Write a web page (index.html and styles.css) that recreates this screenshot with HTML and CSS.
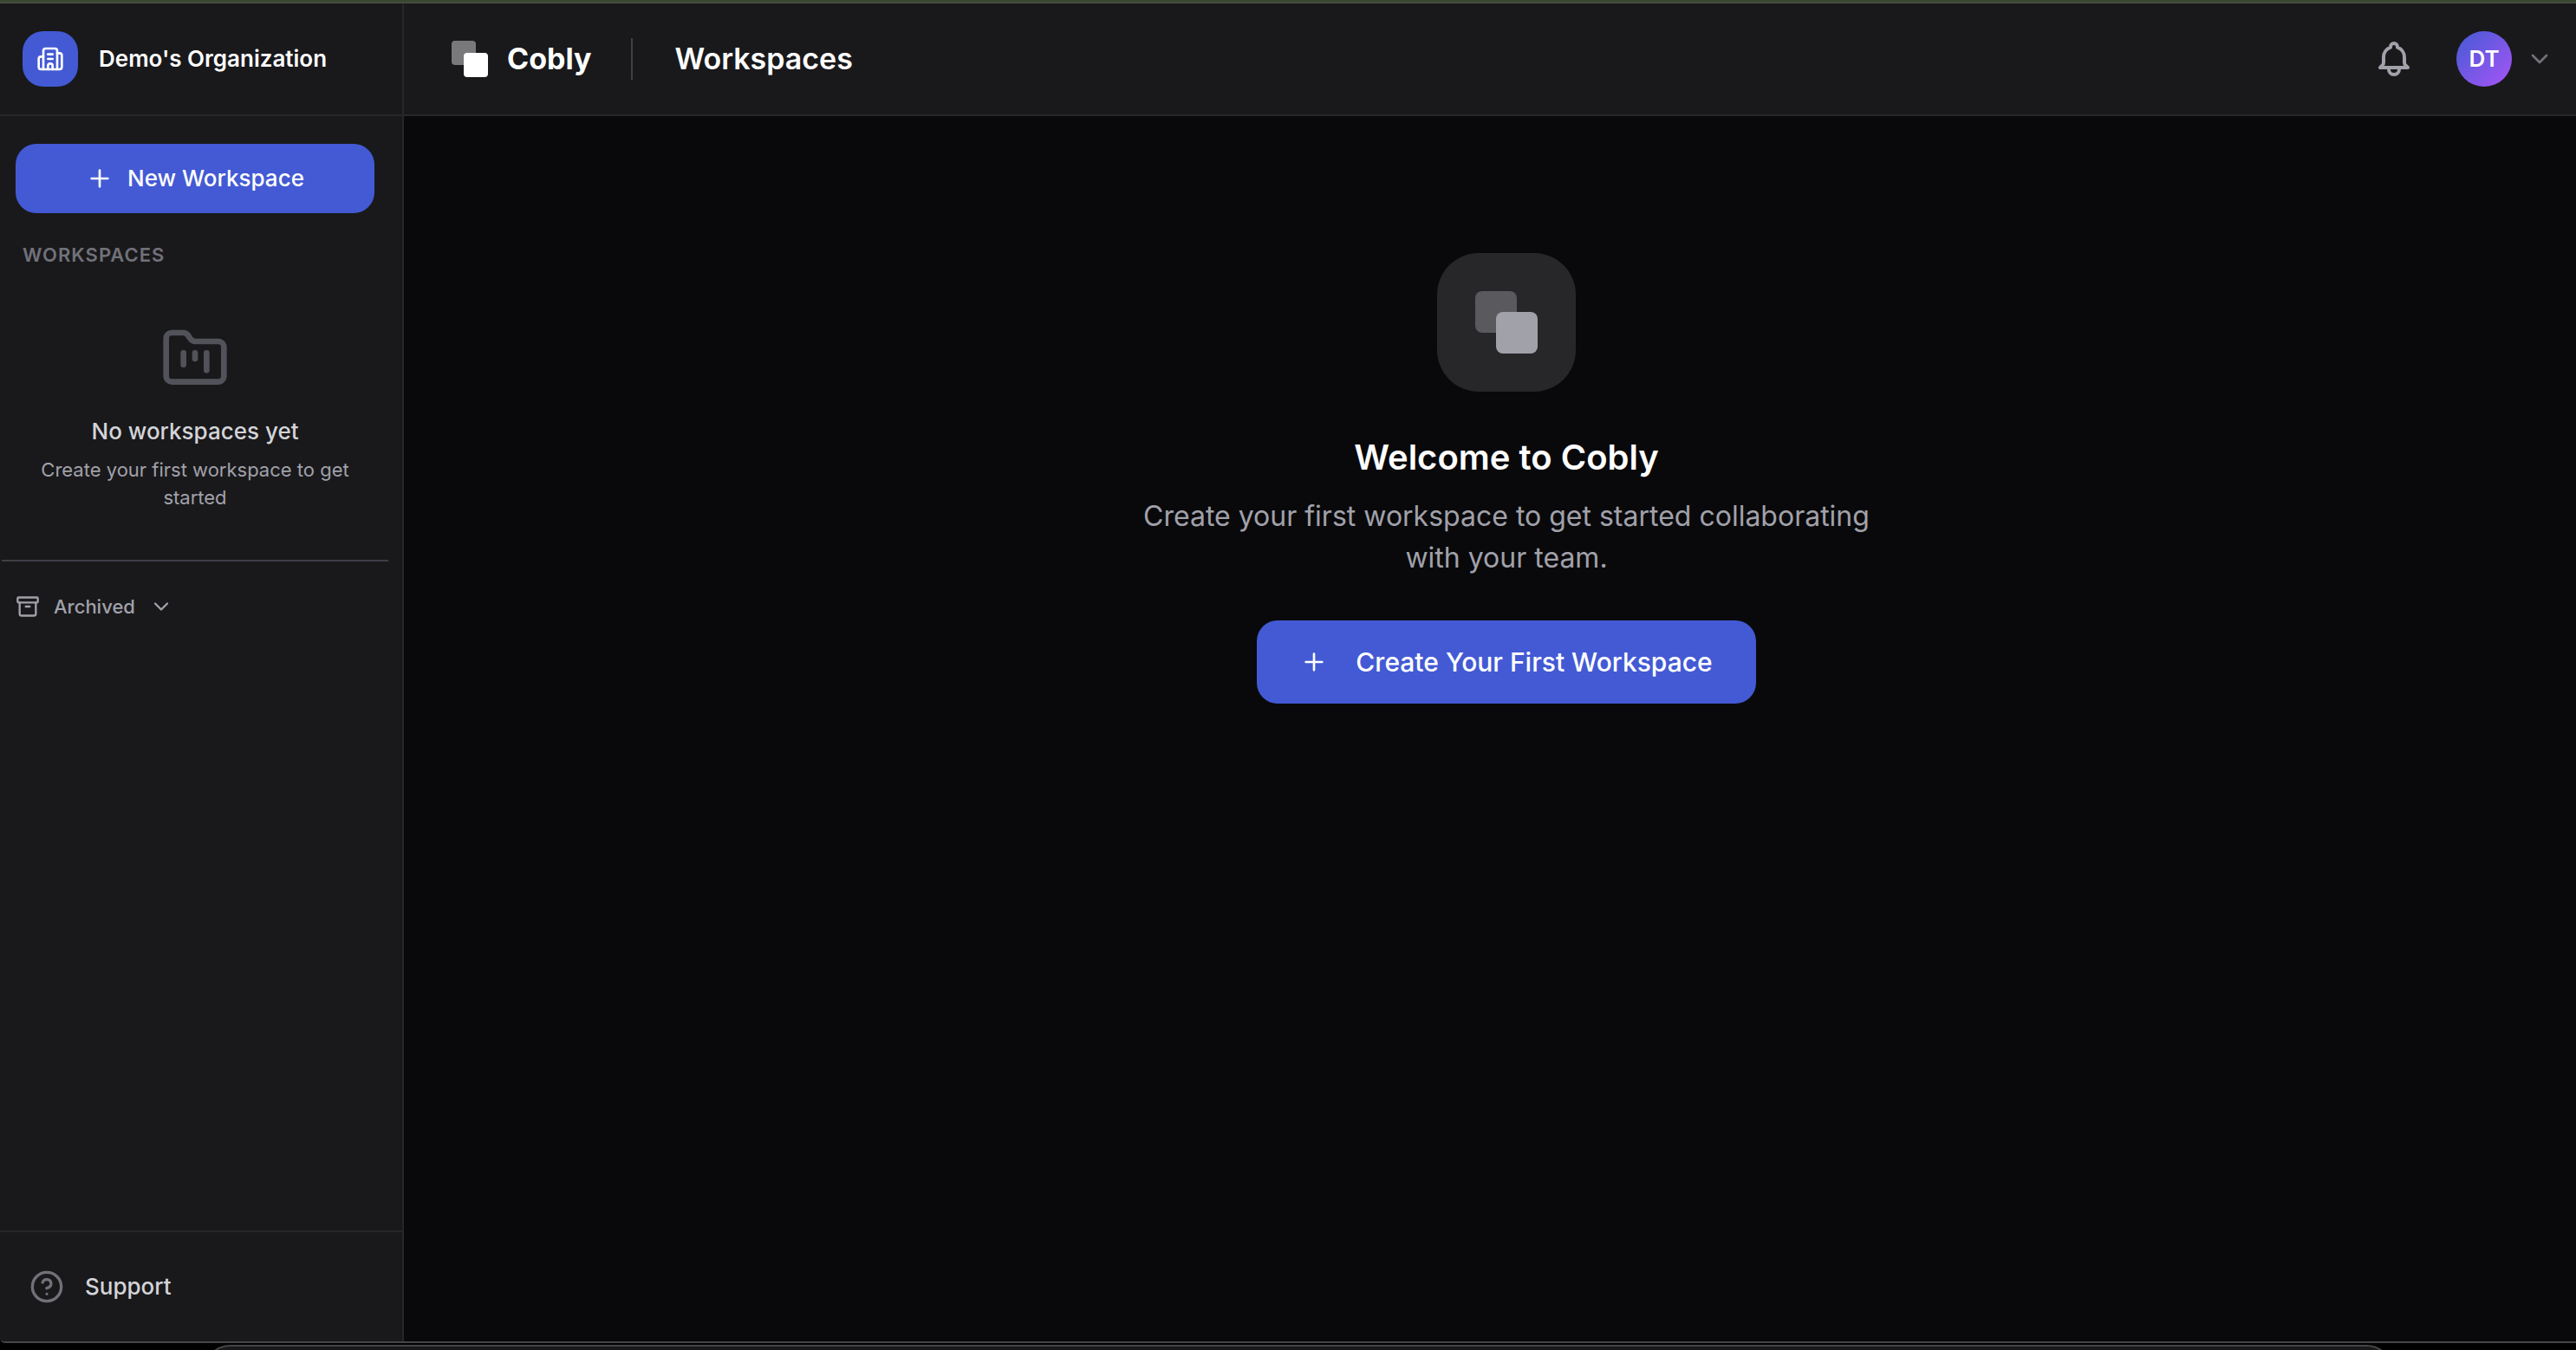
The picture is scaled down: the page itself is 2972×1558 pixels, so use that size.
FILE: index.html
```html
<!DOCTYPE html>
<html lang="en">
<head>
  <meta charset="UTF-8">
  <meta name="viewport" content="width=device-width, initial-scale=1.0">
  <title>Cobly - Workspaces</title>
  <link rel="stylesheet" href="styles.css">
</head>
<body>
  <div class="app">
    <aside class="sidebar">
      <div class="org">
        <span class="org-icon">
          <svg class="icon icon-md" viewBox="0 0 24 24" stroke-width="2">
            <path d="M10 12h4M10 8h4M14 21v-3a2 2 0 0 0-4 0v3"/>
            <path d="M6 10H4a2 2 0 0 0-2 2v7a2 2 0 0 0 2 2h16a2 2 0 0 0 2-2V9a2 2 0 0 0-2-2h-2"/>
            <path d="M6 21V5a2 2 0 0 1 2-2h8a2 2 0 0 1 2 2v16"/>
          </svg>
        </span>
        <span class="org-name">Demo's Organization</span>
      </div>

      <nav class="sidebar-content">
        <div class="workspaces">
          <button class="btn btn-new" type="button">
            <svg class="icon icon-md" viewBox="0 0 24 24" stroke-width="2"><path d="M5 12h14M12 5v14"/></svg>
            New Workspace
          </button>
          <h2 class="section-title">Workspaces</h2>
          <div class="empty">
            <svg class="icon icon-folder" viewBox="0 0 24 24" stroke-width="2">
              <path d="M4 20h16a2 2 0 0 0 2-2V8a2 2 0 0 0-2-2h-7.93a2 2 0 0 1-1.66-.9l-.82-1.2A2 2 0 0 0 7.93 3H4a2 2 0 0 0-2 2v13c0 1.1.9 2 2 2Z"/>
              <path d="M8 10v4M12 10v2M16 10v6"/>
            </svg>
            <p class="empty-title">No workspaces yet</p>
            <p class="empty-text">Create your first workspace to get started</p>
          </div>
        </div>
        <button class="archived" type="button">
          <svg class="icon icon-sm" viewBox="0 0 24 24" stroke-width="2">
            <rect x="2" y="3" width="20" height="5" rx="1"/>
            <path d="M4 8v11a2 2 0 0 0 2 2h12a2 2 0 0 0 2-2V8M10 12h4"/>
          </svg>
          Archived
          <svg class="icon icon-sm" viewBox="0 0 24 24" stroke-width="2"><path d="m6 9 6 6 6-6"/></svg>
        </button>
      </nav>

      <a class="support" href="#">
        <svg class="icon icon-lg" viewBox="0 0 24 24" stroke-width="2">
          <circle cx="12" cy="12" r="10"/>
          <path d="M9.09 9a3 3 0 0 1 5.83 1c0 2-3 3-3 3M12 17h.01"/>
        </svg>
        Support
      </a>
    </aside>

    <div class="page">
      <header class="topbar">
        <a class="brand" href="#">
          <svg class="brand-logo" viewBox="0 0 42 42">
            <rect class="logo-back" width="28" height="28" rx="4"/>
            <rect class="logo-front" x="14" y="14" width="28" height="28" rx="4"/>
          </svg>
          Cobly
        </a>
        <h1 class="page-title">Workspaces</h1>
        <button class="bell" type="button" aria-label="Notifications">
          <svg class="icon icon-bell" viewBox="0 0 24 24" stroke-width="2">
            <path d="M15 17h5l-1.405-1.405A2.032 2.032 0 0118 14.158V11a6.002 6.002 0 00-4-5.659V5a2 2 0 10-4 0v.341C7.67 6.165 6 8.388 6 11v3.159c0 .538-.214 1.055-.595 1.436L4 17h5m6 0v1a3 3 0 11-6 0v-1m6 0H9"/>
          </svg>
        </button>
        <button class="account" type="button">
          <span class="avatar">DT</span>
          <svg class="icon icon-md" viewBox="0 0 24 24" stroke-width="2"><path d="m6 9 6 6 6-6"/></svg>
        </button>
      </header>

      <main class="welcome">
        <div class="welcome-logo">
          <svg class="tile-logo" viewBox="0 0 72 72">
            <rect class="logo-back" width="48" height="48" rx="8"/>
            <rect class="logo-front" x="24" y="24" width="48" height="48" rx="8"/>
          </svg>
        </div>
        <h2 class="welcome-title">Welcome to Cobly</h2>
        <p class="welcome-text">Create your first workspace to get started collaborating with your team.</p>
        <button class="btn btn-create" type="button">
          <svg class="icon icon-md" viewBox="0 0 24 24" stroke-width="2"><path d="M5 12h14M12 5v14"/></svg>
          Create Your First Workspace
        </button>
      </main>
    </div>
  </div>

  <div class="desktop">
    <div class="next-window"></div>
  </div>
</body>
</html>
```

FILE: styles.css
```css
* {
  box-sizing: border-box;
}

body {
  margin: 0;
  height: 100vh;
  display: flex;
  flex-direction: column;
  background: #000;
  color: #fff;
  font-family: Inter, sans-serif;
  font-size: 26px;
  line-height: 40px;
  overflow: hidden;
}

h1, h2, p {
  margin: 0;
}

button {
  font: inherit;
  color: inherit;
  background: none;
  border: none;
  padding: 0;
  cursor: pointer;
}

a {
  color: inherit;
  text-decoration: none;
}

.app {
  flex: 1;
  display: flex;
  border-top: 2px solid #484b41;
  border-bottom: 2px solid #454547;
  box-shadow: 0 -2px 0 #37472f;
  margin-top: 2px;
  border-bottom-left-radius: 6px;
  overflow: hidden;
}

/* icons */
.icon {
  flex: none;
  fill: none;
  stroke: currentColor;
  stroke-linecap: round;
  stroke-linejoin: round;
}

.icon-sm {
  width: 28px;
  height: 28px;
}

.icon-md {
  width: 32px;
  height: 32px;
}

.icon-lg {
  width: 40px;
  height: 40px;
  color: #71717a;
}

.icon-bell {
  display: block;
  width: 48px;
  height: 48px;
}

.icon-folder {
  width: 80px;
  height: 80px;
  color: #52525b;
}

.logo-back {
  fill: #79797b;
}

.logo-front {
  fill: #fff;
}

/* sidebar */
.sidebar {
  flex: none;
  width: 466px;
  display: flex;
  flex-direction: column;
  background: #19191b;
  border-right: 2px solid #27272a;
}

.org {
  display: flex;
  align-items: center;
  gap: 24px;
  height: 130px;
  padding: 0 26px;
  border-bottom: 2px solid #27272a;
  font-weight: 600;
}

.org-icon {
  display: grid;
  place-items: center;
  width: 64px;
  height: 64px;
  border-radius: 24px;
  background: #435ad4;
}

.sidebar-content {
  flex: 1;
  padding: 32px 16px 0 2px;
}

.workspaces {
  padding: 0 16px 56px;
  border-bottom: 2px solid #3f3f46;
}

.btn {
  display: flex;
  align-items: center;
  justify-content: center;
  gap: 16px;
  border-radius: 24px;
  background: #435ad4;
  font-weight: 500;
}

.btn-new {
  width: 100%;
  height: 80px;
}

.section-title {
  margin-top: 32px;
  padding: 0 8px;
  color: #71717a;
  font-size: 22px;
  line-height: 32px;
  font-weight: 600;
  letter-spacing: 1px;
  text-transform: uppercase;
}

.empty {
  display: flex;
  flex-direction: column;
  align-items: center;
  padding: 64px 16px 0;
  text-align: center;
}

.empty-title {
  margin-top: 24px;
  color: #d4d4d8;
  font-weight: 500;
}

.empty-text {
  margin-top: 8px;
  color: #a1a1aa;
  font-size: 22px;
  line-height: 32px;
}

.archived {
  display: flex;
  align-items: center;
  gap: 16px;
  padding: 32px 16px;
  color: #a1a1aa;
  font-size: 22px;
  font-weight: 500;
}

.support {
  display: flex;
  align-items: center;
  gap: 24px;
  height: 128px;
  padding: 0 34px;
  border-top: 2px solid #27272a;
  color: #d4d4d8;
  font-weight: 500;
}

/* top bar */
.page {
  flex: 1;
  display: flex;
  flex-direction: column;
  background: #09090b;
}

.topbar {
  display: flex;
  align-items: center;
  height: 130px;
  padding: 0 26px 0 55px;
  background: #19191b;
  border-bottom: 2px solid #27272a;
}

.brand {
  display: flex;
  align-items: center;
  gap: 22px;
  height: 48px;
  padding-right: 46px;
  border-right: 2px solid #3f3f46;
  font-size: 34px;
  font-weight: 700;
}

.brand-logo {
  width: 42px;
  height: 42px;
}

.page-title {
  margin-left: 48px;
  font-size: 34px;
  font-weight: 600;
}

.bell {
  margin-left: auto;
  color: #a1a1aa;
}

.account {
  display: flex;
  align-items: center;
  gap: 16px;
  margin-left: 48px;
  color: #71717a;
}

.avatar {
  display: grid;
  place-items: center;
  width: 64px;
  height: 64px;
  border-radius: 50%;
  background: linear-gradient(135deg, #435ad4, #a855f7);
  color: #fff;
  font-weight: 600;
}

/* welcome */
.welcome {
  flex: 1;
  display: flex;
  flex-direction: column;
  align-items: center;
  padding: 158px 0 0 38px;
  text-align: center;
}

.welcome-logo {
  display: grid;
  place-items: center;
  width: 160px;
  height: 160px;
  border-radius: 48px;
  background: #27272a;
}

.tile-logo {
  width: 72px;
  height: 72px;
}

.tile-logo .logo-back {
  fill: #5a5a5e;
}

.tile-logo .logo-front {
  fill: #a1a1aa;
}

.welcome-title {
  margin-top: 48px;
  font-size: 40px;
  line-height: 56px;
  font-weight: 600;
}

.welcome-text {
  max-width: 896px;
  margin-top: 16px;
  color: #a1a1aa;
  font-size: 32px;
  line-height: 48px;
}

.btn-create {
  gap: 32px;
  height: 96px;
  margin-top: 48px;
  padding: 0 50px;
  font-size: 30px;
}

/* strip under the app window */
.desktop {
  height: 8px;
  padding: 2px 210px 0 234px;
  overflow: hidden;
}

.next-window {
  height: 80px;
  border: 2px solid #454547;
  border-radius: 32px;
  background: #19191b;
}
```
